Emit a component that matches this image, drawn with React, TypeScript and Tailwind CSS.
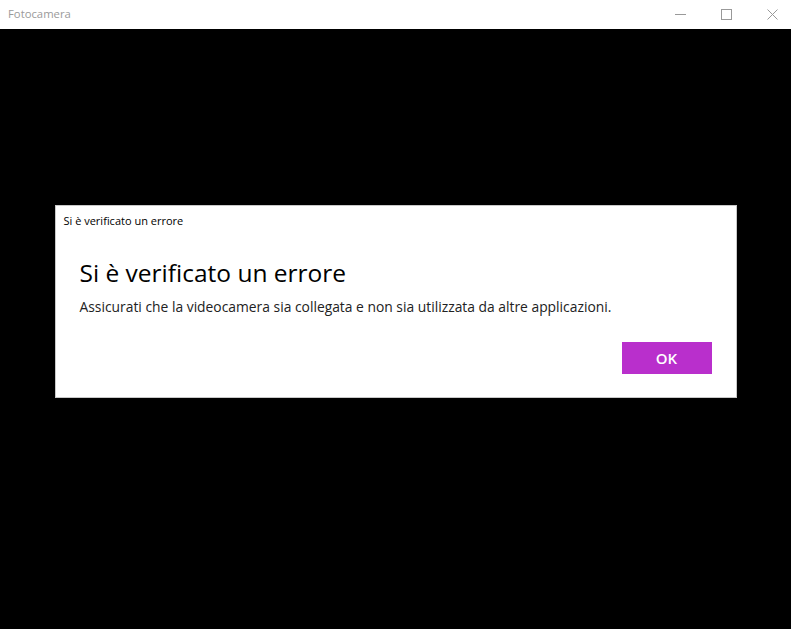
import React from "react";

export default function App() {
  return (
    <div className="w-[791px] h-[629px] flex flex-col bg-black overflow-hidden" style={{ fontFamily: '"Open Sans", "Noto Sans", sans-serif' }}>
      {/* Title bar */}
      <div className="h-[29px] bg-white flex items-center shrink-0">
        <span className="pl-[8px] text-[11.3px] text-[#9a9a9a] flex-1">Fotocamera</span>
        <div className="flex items-center gap-[35px] pr-[13px]">
          <svg width="11" height="11" viewBox="0 0 11 11"><path d="M0 5.5h11" stroke="#999" strokeWidth="1" /></svg>
          <svg width="11" height="11" viewBox="0 0 11 11"><rect x="0.5" y="0.5" width="10" height="10" fill="none" stroke="#999" strokeWidth="1" /></svg>
          <svg width="11" height="11" viewBox="0 0 11 11"><path d="M0.5 0.5l10 10M10.5 0.5l-10 10" stroke="#999" strokeWidth="1" /></svg>
        </div>
      </div>

      {/* Camera area */}
      <div className="flex-1 flex justify-center pt-[176px]">
        <div className="w-[682px] h-[193px] bg-white border border-[#c8c8c8] flex flex-col">
          <div className="pl-[8px] pt-[8px] text-[11px] text-black leading-[14px]">Si è verificato un errore</div>
          <div className="pl-[24px] pr-[24px] pt-[30px]">
            <h1 className="text-[24.5px] leading-[30px] text-black font-normal">Si è verificato un errore</h1>
            <p className="text-[13.85px] leading-[20px] text-[#222] mt-[9px]">
              Assicurati che la videocamera sia collegata e non sia utilizzata da altre applicazioni.
            </p>
          </div>
          <div className="flex justify-end pr-[24px] mt-auto pb-[23px]">
            <button className="w-[90px] h-[32px] bg-[#b92fcc] text-white text-[15px] font-semibold">OK</button>
          </div>
        </div>
      </div>
    </div>
  );
}
